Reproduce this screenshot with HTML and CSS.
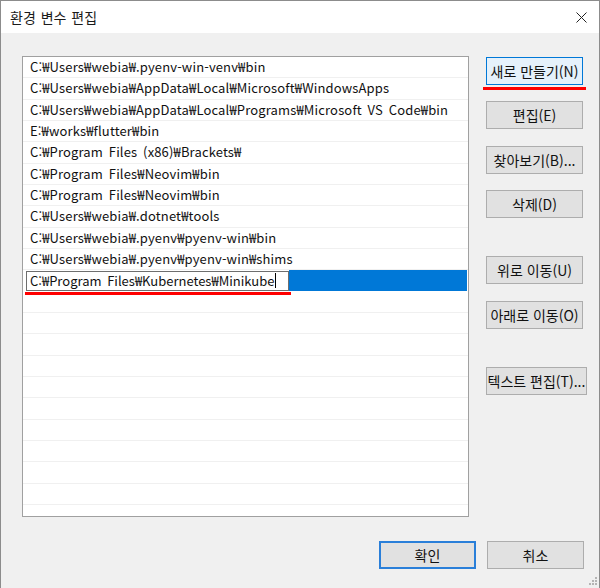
FILE: index.html
```html
<!DOCTYPE html>
<html lang="ko">
<head>
  <meta charset="UTF-8">
  <title>환경 변수 편집</title>
  <link rel="stylesheet" href="styles.css">
</head>
<body>
<div class="window">
  <div class="titlebar">
    <span class="title">환경 변수 편집</span>
    <span class="close">
      <svg width="11" height="11" viewBox="0 0 11 11">
        <path d="M0.5 0.5 L10.5 10.5 M10.5 0.5 L0.5 10.5" stroke="#222" stroke-width="1" fill="none"/>
      </svg>
    </span>
  </div>

  <div class="content">
    <div class="main">
      <div class="list">
        <div class="row">C:₩Users₩webia₩.pyenv-win-venv₩bin</div>
        <div class="row">C:₩Users₩webia₩AppData₩Local₩Microsoft₩WindowsApps</div>
        <div class="row">C:₩Users₩webia₩AppData₩Local₩Programs₩Microsoft VS Code₩bin</div>
        <div class="row">E:₩works₩flutter₩bin</div>
        <div class="row">C:₩Program Files (x86)₩Brackets₩</div>
        <div class="row">C:₩Program Files₩Neovim₩bin</div>
        <div class="row">C:₩Program Files₩Neovim₩bin</div>
        <div class="row">C:₩Users₩webia₩.dotnet₩tools</div>
        <div class="row">C:₩Users₩webia₩.pyenv₩pyenv-win₩bin</div>
        <div class="row">C:₩Users₩webia₩.pyenv₩pyenv-win₩shims</div>
        <div class="row selected">
          <div class="edit">C:₩Program Files₩Kubernetes₩Minikube<span class="caret"></span></div>
          <div class="fill"></div>
          <div class="mark mark-edit"></div>
        </div>
        <div class="row"></div>
        <div class="row"></div>
        <div class="row"></div>
        <div class="row"></div>
        <div class="row"></div>
        <div class="row"></div>
        <div class="row"></div>
        <div class="row"></div>
        <div class="row"></div>
        <div class="row"></div>
        <div class="row"></div>
      </div>

      <div class="actions">
        <button class="btn btn-active">새로 만들기(N)<span class="mark mark-btn"></span></button>
        <button class="btn">편집(E)</button>
        <button class="btn gap-mid">찾아보기(B)...</button>
        <button class="btn">삭제(D)</button>
        <button class="btn gap-large">위로 이동(U)</button>
        <button class="btn gap-mid">아래로 이동(O)</button>
        <button class="btn btn-wide gap-large">텍스트 편집(T)...</button>
      </div>
    </div>

    <div class="footer">
      <button class="btn btn-default">확인</button>
      <button class="btn">취소</button>
    </div>
  </div>

  <svg class="grip" width="10" height="10" viewBox="0 0 10 10">
    <rect x="7" y="1" width="2" height="2" fill="#b4b4b4"/>
    <rect x="4" y="4" width="2" height="2" fill="#b4b4b4"/>
    <rect x="7" y="4" width="2" height="2" fill="#b4b4b4"/>
    <rect x="1" y="7" width="2" height="2" fill="#b4b4b4"/>
    <rect x="4" y="7" width="2" height="2" fill="#b4b4b4"/>
    <rect x="7" y="7" width="2" height="2" fill="#b4b4b4"/>
  </svg>
</div>
</body>
</html>
```

FILE: styles.css
```css
* {
  margin: 0;
  padding: 0;
  box-sizing: border-box;
}

html, body {
  width: 100%;
  height: 100%;
  background: #f0f0f0;
}

body {
  font-family: "Noto Sans CJK KR", "Open Sans", sans-serif;
  font-size: 13px;
  color: #000;
}

.window {
  position: relative;
  width: 600px;
  height: 588px;
  border: 1px solid #8c8c8c;
  border-bottom: none;
  background: #f0f0f0;
  overflow: hidden;
}

.titlebar {
  height: 32px;
  background: #fff;
  display: flex;
  align-items: center;
  justify-content: space-between;
  padding: 0 12px 0 9px;
}

.title {
  font-size: 14px;
  line-height: 20px;
  color: #1a1a1a;
  word-spacing: 1px;
}

.close {
  display: flex;
  align-items: center;
}

.content {
  padding: 23px 15px 0 21px;
}

.main {
  display: flex;
  gap: 17px;
}

.list {
  flex-shrink: 0;
  width: 447px;
  height: 461px;
  border: 1px solid #a0a0a0;
  background: #fff;
  overflow: hidden;
}

.row {
  height: 21.33px;
  line-height: 20px;
  padding-left: 7px;
  border-bottom: 1px solid #f0f0f0;
  white-space: nowrap;
  color: #111;
  letter-spacing: 0.15px;
  word-spacing: 2px;
}

.selected {
  position: relative;
  display: flex;
  align-items: center;
  padding-left: 3px;
  padding-right: 1px;
  border-bottom: none;
}

.edit {
  width: 263px;
  height: 20px;
  border: 1px solid #6e6e6e;
  background: #fff;
  padding-left: 3px;
  line-height: 18px;
  letter-spacing: 0;
  display: flex;
  align-items: center;
}

.caret {
  display: inline-block;
  width: 1px;
  height: 15px;
  margin-left: 1px;
  background: #000;
}

.fill {
  flex: 1;
  height: 21px;
  background: #0078d7;
}

.mark {
  position: absolute;
  height: 3px;
  background: #f00;
}

.mark-edit {
  left: 2px;
  top: 22px;
  width: 266px;
}

.mark-btn {
  left: -4px;
  top: 29px;
  width: 103px;
}

.actions {
  width: 97px;
  display: flex;
  flex-direction: column;
  align-items: flex-start;
  padding-top: 1px;
  gap: 16px;
}

.btn {
  position: relative;
  flex-shrink: 0;
  width: 97px;
  height: 28px;
  border: 1px solid #adadad;
  background: #e1e1e1;
  font-family: inherit;
  font-size: 14px;
  line-height: 20px;
  color: #111;
  white-space: nowrap;
}

.btn-active {
  background: #e5f1fb;
  border-color: #0078d7;
}

.btn-wide {
  width: 101px;
  padding: 0;
}

.gap-mid {
  margin-top: 1px;
}

.gap-large {
  margin-top: 22px;
}

.footer {
  display: flex;
  justify-content: flex-end;
  gap: 11px;
  margin-top: 24px;
}

.btn-default {
  border: 2px solid #2a7fd9;
}

.grip {
  position: absolute;
  right: 1px;
  bottom: 2px;
}
```
